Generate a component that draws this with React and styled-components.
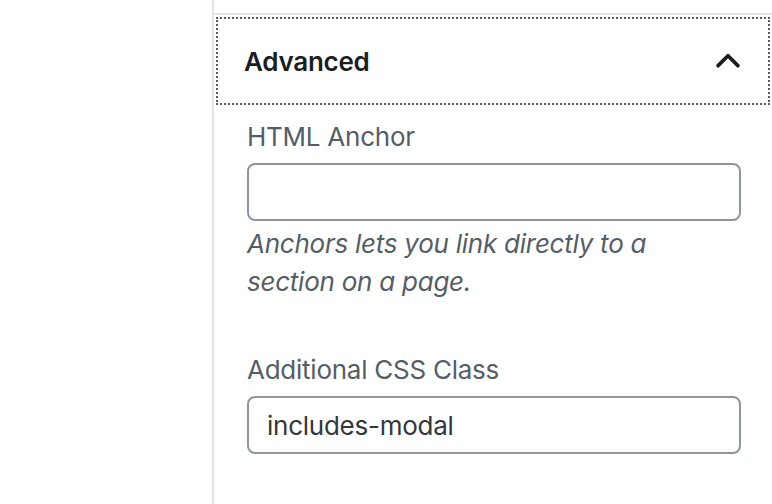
import React from 'react'
import styled, { createGlobalStyle } from 'styled-components'

const GlobalStyle = createGlobalStyle`
  html, body {
    margin: 0;
    padding: 0;
    background: #fff;
  }
  body {
    font-family: Inter, "Noto Sans", "Liberation Sans", sans-serif;
    letter-spacing: -0.25px;
    color: #191e23;
  }
`

const Page = styled.div`
  display: flex;
  height: 504px;
  overflow: hidden;
`
const Canvas = styled.div`
  width: 212px;
  flex-shrink: 0;
`
const Sidebar = styled.div`
  flex: 1;
  border-left: 2px solid #e2e4e7;
  padding-top: 13px;
`
const Panel = styled.div`
  border-top: 2px solid #e2e4e7;
`
const PanelToggle = styled.button`
  display: flex;
  align-items: center;
  justify-content: space-between;
  width: 100%;
  height: 92px;
  padding: 0 30px 0 30px;
  margin: 0;
  border: none;
  background: #fff;
  outline: 2px dotted #555d66;
  outline-offset: -4px;
  font-family: inherit;
  letter-spacing: inherit;
  font-size: 26px;
  font-weight: 600;
  color: #191e23;
  cursor: pointer;
`
const PanelBody = styled.div`
  padding: 12px 31px 0 33px;
`
const Field = styled.div`
  margin-bottom: ${(p) => p.spacing || 0}px;
`
const Label = styled.label`
  display: block;
  font-size: 26px;
  line-height: 36px;
  color: #555d66;
  margin-bottom: 8px;
`
const Input = styled.input`
  display: block;
  box-sizing: border-box;
  width: 100%;
  height: 58px;
  margin: 0;
  padding: 0 18px;
  border: 2px solid #8d96a0;
  border-radius: 8px;
  font-family: inherit;
  letter-spacing: inherit;
  font-size: 26px;
  color: #32373c;
  background: #fff;
  outline: none;
`
const Help = styled.p`
  max-width: 460px;
  margin: 4px 0 0;
  font-size: 26px;
  line-height: 38px;
  font-style: italic;
  color: #555d66;
`

const Chevron = () => (
  <svg width="28" height="28" viewBox="0 0 24 24" fill="none">
    <path d="M3.5 16 L12 7.5 L20.5 16" stroke="#191e23" strokeWidth="3.2" strokeLinecap="round" strokeLinejoin="round" />
  </svg>
)

export default function App() {
  return (
    <Page>
      <GlobalStyle />
      <Canvas />
      <Sidebar>
        <Panel>
          <PanelToggle type="button">
            Advanced
            <Chevron />
          </PanelToggle>
          <PanelBody>
            <Field spacing={51}>
              <Label>HTML Anchor</Label>
              <Input defaultValue="" />
              <Help>Anchors lets you link directly to a section on a page.</Help>
            </Field>
            <Field>
              <Label>Additional CSS Class</Label>
              <Input defaultValue="includes-modal" />
            </Field>
          </PanelBody>
        </Panel>
      </Sidebar>
    </Page>
  )
}
